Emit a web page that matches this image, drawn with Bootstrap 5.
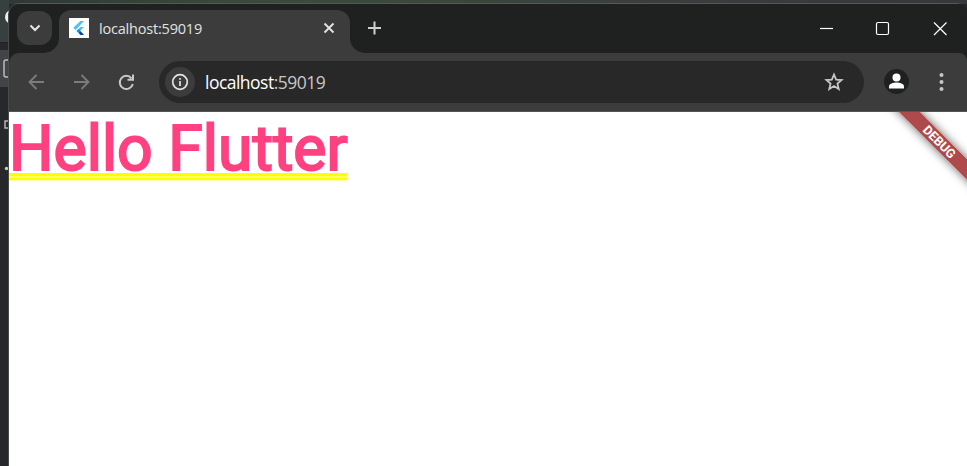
<!DOCTYPE html>
<html lang="en">
<head>
<meta charset="utf-8">
<meta name="viewport" content="width=device-width, initial-scale=1">
<title>localhost:59019</title>
<link href="https://cdn.jsdelivr.net/npm/bootstrap@5.3.0/dist/css/bootstrap.min.css" rel="stylesheet">
<style>
body{height:466px;background:#26282b;font-family:"Open Sans",sans-serif}
svg{display:block;flex:none}
.behind{width:9px}
.win{background:#1f2120;border-radius:10px 10px 0 0;margin-top:4px;box-shadow:-1px 0 #4a4b4d,0 -1px #555856}
.topglow{height:4px;left:0;right:0;background:linear-gradient(90deg,#2f3735,#3a4a3a 25%,#3a4a3c 40%,#3a3c3e 70%,#37383b)}
.strip{height:49px}
.cell{background:#3c3c3c}
.cell-first{border-radius:10px 0 0 0}
.left-part{width:50px;height:49px;background:#1f2120;border-radius:10px 0 15px 0;padding:7px 0 0 8px}
.picker{width:35px;height:34px;border-radius:12px;background:#3c3c3c}
.tab-wrap{width:291px;background:#1f2120;padding-top:6px}
.tab{background:#3c3c3c;border-radius:12px 13px 0 0;height:43px;padding:0 13px 7px 10px;font-size:14.5px;color:#e3e3e3}
.tab-name{letter-spacing:-.2px;margin-left:10px;line-height:20px;padding-top:2px}
.right-part{background:#1f2120;border-radius:0 8px 0 15px;height:49px}
.corner-base{background:linear-gradient(90deg,#3c3c3c 50%,#1f2120 50%);border-radius:0 8px 0 0}
.controls{margin-right:11px}
.tools{height:58px;background:#3c3c3c;border-radius:10px 8px 0 0}
.omni{width:705px;height:42px;border-radius:21px;background:#282828;padding:0 20px 0 6px;margin-left:23px}
.info{width:30px;height:30px;background:#3c3c3c}
.addr{font-size:17.5px;color:#fff;letter-spacing:-.52px;margin-left:10px;padding-top:1px}
.addr .port{color:#c7c7c7}
.dots{margin:0 22px 0 28px}
.view{border-top:1px solid #555;background:#fff}
.hello{font:400 62.5px/73px Roboto,sans-serif;-webkit-text-stroke:2px #ff4081;color:#ff4081;margin:0;width:338px;height:69px;white-space:nowrap;background:linear-gradient(#ff0 0 3px,#ffff60 3px 5px,#ff0 5px 7px,#ffffb0 7px) 0 100%/338px 8px no-repeat}
.ribbon{width:160px;height:15px;left:850px;top:22px;transform:rotate(45deg);background:rgba(172,68,70,.97);box-shadow:0 0 10px rgba(0,0,0,.6);color:#fff;font:700 12.75px/15px Roboto,sans-serif;text-align:center;letter-spacing:-.1px;text-indent:1px}
</style>
<script src="https://cdn.jsdelivr.net/npm/bootstrap@5.3.0/dist/js/bootstrap.bundle.min.js"></script>
</head>
<body class="overflow-hidden position-relative">
<div class="topglow position-absolute"></div>
<div class="d-flex h-100 position-relative">
  <div class="behind flex-shrink-0 overflow-hidden">
    <svg width="9" height="466"><rect width="9" height="43" fill="#37403f"/><rect y="42" width="9" height="1" fill="#202224"/><rect y="50" width="9" height="37" fill="#434447"/><circle cx="12" cy="17" r="7" fill="#eee"/><rect x="4" y="60" width="12" height="17" rx="2" fill="none" stroke="#bbb" stroke-width="1.5"/><rect x="5" y="121" width="9" height="7" fill="none" stroke="#b5b5b7" stroke-width="1.5"/><circle cx="6.500" cy="168.500" r="1.700" fill="#ccc"/></svg>
  </div>
  <div class="win flex-grow-1 d-flex flex-column">
    <header class="strip d-flex">
      <div class="cell cell-first"><div class="left-part">
        <div class="picker d-flex align-items-center justify-content-center"><svg width="12" height="12" fill="none" stroke="#e8e8e8" stroke-width="2"><path d="M1.500 3.500 6 8l4.500-4.500"/></svg></div>
      </div></div>
      <div class="tab-wrap"><div class="tab d-flex align-items-center">
        <svg width="20" height="20"><path fill="#fff" d="M0 0h20v20H0z"/><path fill="#45c3f8" d="M11.500 3H15L6.500 12 4.300 9.800zM11.500 9H15l-4 4 4 4h-3.500l-4-4z"/><path fill="#1a8ee0" d="m7.500 13 2-2 2.300 2-2 2z"/><path fill="#01479d" d="m9.800 15 1.800-1.700L15 17h-3.500z"/></svg>
        <span class="tab-name me-auto">localhost:59019</span>
        <svg width="16" height="16" stroke="#e3e3e3" stroke-width="1.900"><path d="m3.500 3.500 9 9m0-9-9 9"/></svg>
      </div></div>
      <div class="corner-base flex-grow-1"><div class="right-part d-flex align-items-center">
        <svg class="ms-3 me-auto" width="18" height="18" stroke="#d0d0d0" stroke-width="2"><path d="M2 8h13M8.500 1.500v13"/></svg>
        <svg class="controls" width="136" height="18" stroke="#fff" fill="none" stroke-width="1.200"><path d="M0 8.500h13" /><rect x="56.500" y="2.500" width="12" height="12" rx="1.500"/><path d="m114 2.500 12.500 12.500m0-12.500L114 15"/></svg>
      </div></div>
    </header>
    <div class="tools d-flex align-items-center">
      <svg width="127" height="22" fill="none" stroke="#7c7c7c" stroke-width="1.800"><path d="M35 11H21m6.500-7-7 7 7 7M65 11h14m-6.500-7 7 7-7 7"/><path stroke="#c7c7c7" stroke-width="2" d="M122.500 7.300A6.600 6.600 0 1 0 123.800 13M124 3.500v5.300h-5.500"/></svg>
      <div class="omni d-flex align-items-center">
        <div class="info rounded-circle d-flex align-items-center justify-content-center"><svg width="18" height="18" fill="none" stroke="#e3e3e3" stroke-width="1.700"><circle cx="9" cy="9" r="7.300"/><path d="M9 8v5M9 5v1.700"/></svg></div>
        <div class="addr me-auto">localhost<span class="port">:59019</span></div>
        <svg width="20" height="20" fill="none" stroke="#c7c7c7" stroke-width="1.800"><path d="m10 2.500 2.150 5.100 5.450.45-4.150 3.600 1.270 5.350L10 14.100 5.280 17l1.270-5.350L2.400 8.050l5.450-.45z"/></svg>
      </div>
      <svg class="ms-auto" width="26" height="26"><circle cx="13.500" cy="12.500" r="12.500" fill="#1f2120"/><circle cx="13.500" cy="8.500" r="4" fill="#fff"/><path fill="#fff" d="M6 19.500v-2c0-3 4.500-4 7.500-4s7.500 1 7.500 4v2z"/></svg>
      <svg class="dots" width="8" height="24" fill="#c7c7c7"><circle cx="4.500" cy="5" r="2"/><circle cx="4.500" cy="12" r="2"/><circle cx="4.500" cy="19" r="2"/></svg>
    </div>
    <main class="view flex-grow-1 position-relative overflow-hidden">
      <h1 class="hello">Hello Flutter</h1>
      <div class="ribbon position-absolute">DEBUG</div>
    </main>
  </div>
</div>
</body>
</html>
